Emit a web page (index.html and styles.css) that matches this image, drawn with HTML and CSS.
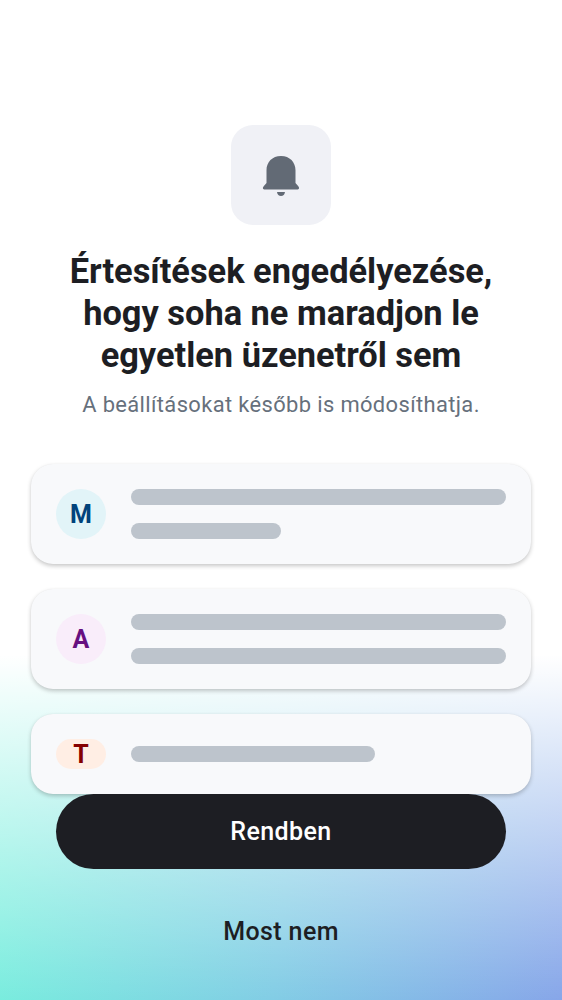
FILE: index.html
```html
<!DOCTYPE html>
<html lang="hu">
<head>
<meta charset="utf-8">
<title>Értesítések</title>
<link rel="stylesheet" href="styles.css">
</head>
<body>
<main class="screen">
  <div class="bell-tile">
    <svg class="bell" width="38" height="42" viewBox="0 0 38 42" aria-hidden="true">
      <path d="M19 1C10.2 1 4.5 7.2 4.5 15.3V28L1.7 31.2C.2 33 .9 34.6 3 34.6H35C37.1 34.6 37.8 33 36.3 31.2L33.5 28V15.3C33.5 7.2 27.8 1 19 1Z"/>
      <path d="M15 37H23C22.6 39.5 21.2 40.9 19 40.9S15.4 39.5 15 37Z"/>
    </svg>
  </div>
  <h1 class="title">Értesítések engedélyezése,<br>hogy soha ne maradjon le<br>egyetlen üzenetről sem</h1>
  <p class="subtitle">A beállításokat később is módosíthatja.</p>
  <section class="cards">
    <article class="card">
      <span class="avatar avatar-m">M</span>
      <div class="lines"><i class="line"></i><i class="line short"></i></div>
    </article>
    <article class="card">
      <span class="avatar avatar-a">A</span>
      <div class="lines"><i class="line"></i><i class="line"></i></div>
    </article>
    <article class="card card-small">
      <span class="avatar avatar-t">T</span>
      <div class="lines"><i class="line medium"></i></div>
    </article>
  </section>
  <div class="actions">
    <button class="button primary">Rendben</button>
    <button class="button secondary">Most nem</button>
  </div>
</main>
</body>
</html>
```
FILE: styles.css
```css
* { box-sizing: border-box; }
body { margin: 0; font-family: Roboto, sans-serif; color: #1d1e23; }
.screen {
  height: 1000px;
  padding-top: 125px;
  display: flex;
  flex-direction: column;
  align-items: center;
  overflow: hidden;
  background:
    linear-gradient(180deg, #fff 655px, rgba(255,255,255,0) 1000px),
    linear-gradient(97deg, #78f1dd 0%, #82cde5 52%, #87a6e9 100%) 0 650px / 100% 350px no-repeat,
    #fff;
}
.bell-tile {
  width: 100px;
  height: 100px;
  border-radius: 22px;
  background: #f0f1f6;
  display: flex;
  align-items: center;
  justify-content: center;
  padding-top: 2px;
  flex: none;
}
.bell { fill: #626a75; }
.title {
  margin: 25px 0 0;
  font-size: 34.4px;
  line-height: 42px;
  font-weight: 700;
  text-align: center;
  white-space: nowrap;
}
.subtitle {
  margin: 13px 0 0;
  font-size: 21.9px;
  line-height: 31px;
  letter-spacing: .38px;
  color: #66707c;
  white-space: nowrap;
}
.cards {
  width: 500px;
  margin-top: 44px;
  display: flex;
  flex-direction: column;
  gap: 25px;
}
.card {
  height: 100px;
  padding: 25px;
  display: flex;
  gap: 25px;
  border-radius: 22px;
  background: #f8f9fb;
  box-shadow: 0 2px 4px rgba(0,0,0,.22), 0 0 1px rgba(0,0,0,.06);
}
.card-small { height: 80px; }
.avatar {
  width: 50px;
  border-radius: 25px;
  display: flex;
  align-items: center;
  justify-content: center;
  padding-top: 2px;
  font-size: 25px;
  font-weight: 700;
  line-height: 30px;
}
.avatar-m { background: #e2f4f8; color: #00427b; }
.avatar-a { background: #f9edfa; color: #671080; }
.avatar-t { background: #ffeee4; color: #850000; }
.lines {
  flex: 1;
  display: flex;
  flex-direction: column;
  justify-content: space-between;
}
.line { height: 16px; border-radius: 8px; background: #bdc4cc; }
.short { width: 150px; }
.medium { width: 244px; margin: auto 0; }
.actions { width: 450px; display: flex; flex-direction: column; gap: 25px; }
.button {
  height: 75px;
  border: 0;
  border-radius: 38px;
  padding: 0;
  font: 500 25px/30px Roboto, sans-serif;
  letter-spacing: .4px;
}
.primary { background: #1d1e23; color: #fff; }
.secondary { background: transparent; color: #1d1e23; }
```
